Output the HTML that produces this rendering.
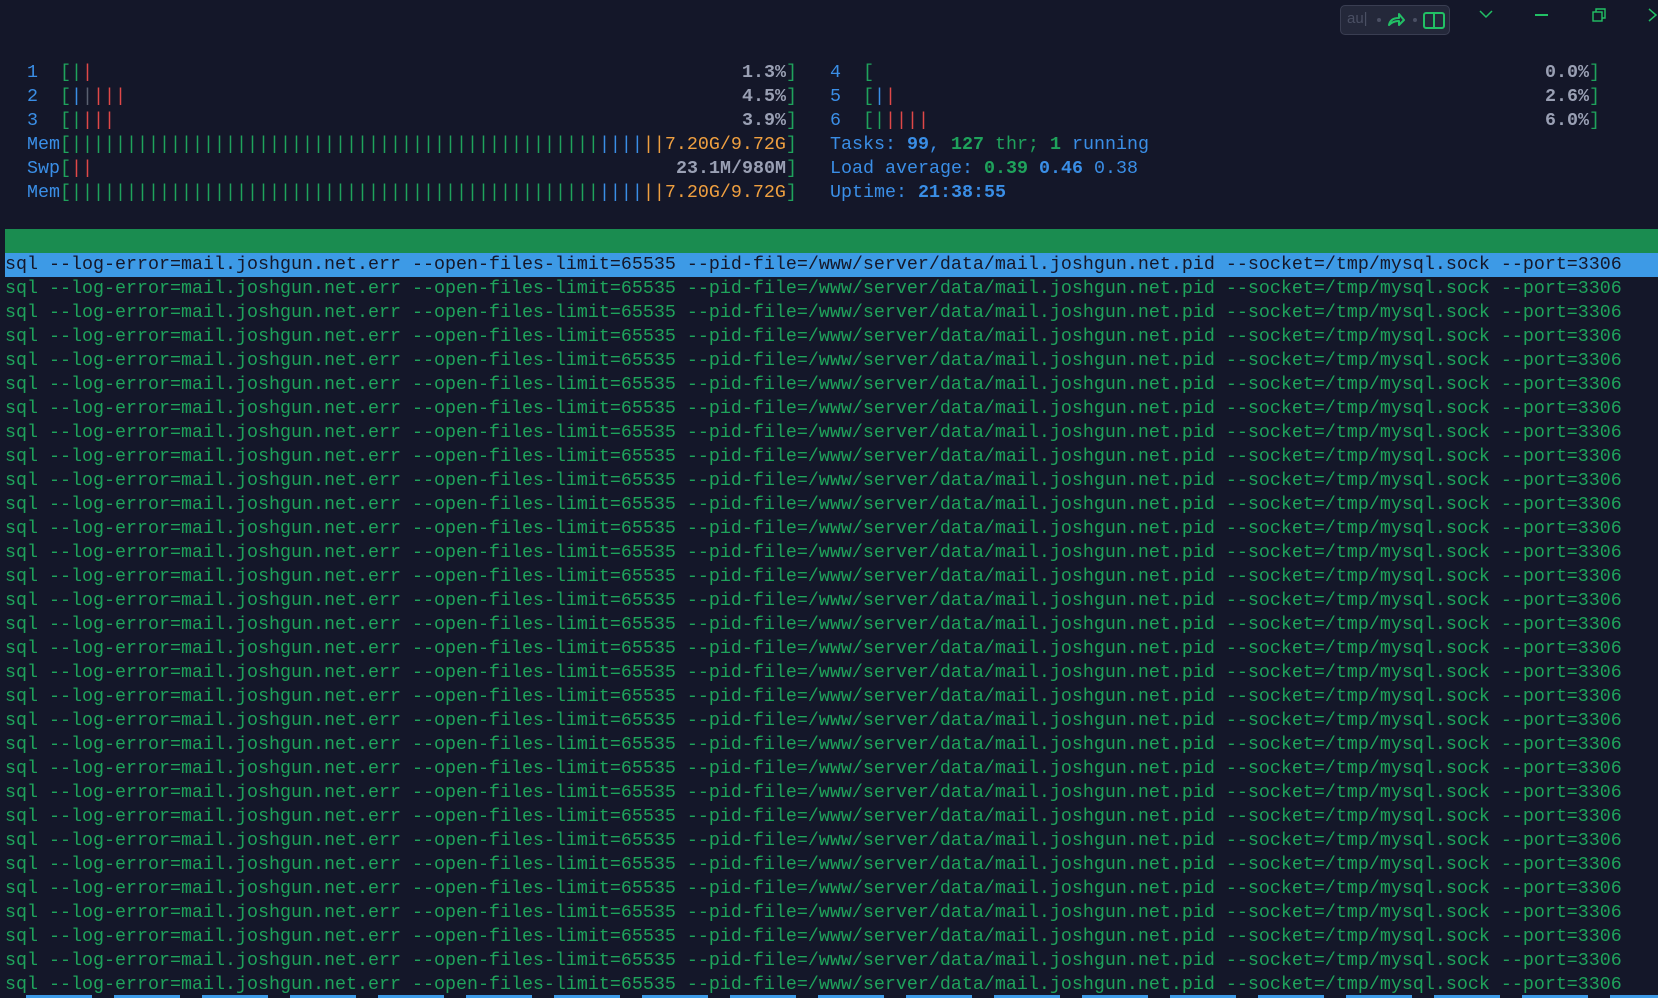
<!DOCTYPE html>
<html><head><meta charset="utf-8"><style>
html,body{margin:0;padding:0;background:#141729;width:1658px;height:998px;overflow:hidden}
body{font-family:"Liberation Mono","DejaVu Sans Mono",monospace;font-size:18.33px;color:#1fa35c}
.r{position:absolute;left:5px;height:24px;width:1653px}
.r span.c{position:absolute;top:0;line-height:24px;white-space:pre}
.b{color:#3a8ee6}.g{color:#1fa35c}.rd{color:#e04848}.gy{color:#9aa0b4;font-weight:bold}.o{color:#f0a040}.B{font-weight:bold}
#hdr{position:absolute;left:5px;top:229px;width:1653px;height:24px;background:#1a8c50}
#sel{position:absolute;left:5px;top:253px;width:1653px;height:24px;background:#3d9ae6;color:#141729}
#procs{position:absolute;left:5px;top:277px;line-height:24px;white-space:pre;color:#1fa35c}
.pill{position:absolute;left:1340px;top:5px;width:108px;height:28px;border:1px solid #3a3e52;border-radius:5px;background:#24283a}
</style></head><body>
<div class="pill"><span style="position:absolute;left:6px;top:4px;font-family:'Liberation Sans',sans-serif;font-size:15px;color:#4a4f63">au|</span>
<span style="position:absolute;left:36px;top:12px;width:4px;height:4px;border-radius:2px;background:#4a4f63"></span>
<svg style="position:absolute;left:46px;top:6px" width="18" height="16" viewBox="0 0 18 16"><path d="M2 13 C3 8 7 6 12 6 L12 2 L17 8 L12 13 L12 9 C8 9 5 10 2 13Z" fill="none" stroke="#22c065" stroke-width="2" stroke-linejoin="round"/></svg>
<span style="position:absolute;left:72px;top:12px;width:4px;height:4px;border-radius:2px;background:#4a4f63"></span>
<svg style="position:absolute;left:82px;top:6px" width="22" height="18"><rect x="1" y="1" width="20" height="15" rx="2" fill="none" stroke="#22c065" stroke-width="2"/><line x1="11" y1="1" x2="11" y2="16" stroke="#22c065" stroke-width="2"/></svg></div>
<svg style="position:absolute;left:1478px;top:8px" width="16" height="12"><path d="M2 3 L8 9 L14 3" fill="none" stroke="#22c065" stroke-width="1.5"/></svg>
<div style="position:absolute;left:1535px;top:14px;width:13px;height:1.5px;background:#22c065"></div>
<svg style="position:absolute;left:1592px;top:8px" width="14" height="14"><rect x="1" y="4" width="9" height="9" fill="none" stroke="#22c065" stroke-width="1.4"/><path d="M4 4 V1 H13 V10 H10" fill="none" stroke="#22c065" stroke-width="1.4"/></svg>
<svg style="position:absolute;left:1648px;top:8px" width="10" height="14"><path d="M1 1 L8 7 L1 13" fill="none" stroke="#22c065" stroke-width="1.5"/></svg>

<div class="r" style="top:61px">
<span class="c b" style="left:22px">1</span><span class="c" style="left:55px"><span class="g">[|</span><span class="rd">|</span></span>
<span class="c gy" style="left:737px">1.3%</span><span class="c g" style="left:781px">]</span>
<span class="c b" style="left:825px">4</span><span class="c g" style="left:858px">[</span>
<span class="c gy" style="left:1540px">0.0%</span><span class="c g" style="left:1584px">]</span></div>
<div class="r" style="top:85px">
<span class="c b" style="left:22px">2</span><span class="c" style="left:55px"><span class="g">[</span><span class="b">|</span><span style="color:#5a6070">|</span><span class="rd">|||</span></span>
<span class="c gy" style="left:737px">4.5%</span><span class="c g" style="left:781px">]</span>
<span class="c b" style="left:825px">5</span><span class="c" style="left:858px"><span class="g">[</span><span class="b">|</span><span class="rd">|</span></span>
<span class="c gy" style="left:1540px">2.6%</span><span class="c g" style="left:1584px">]</span></div>
<div class="r" style="top:109px">
<span class="c b" style="left:22px">3</span><span class="c" style="left:55px"><span class="g">[|</span><span class="rd">|||</span></span>
<span class="c gy" style="left:737px">3.9%</span><span class="c g" style="left:781px">]</span>
<span class="c b" style="left:825px">6</span><span class="c" style="left:858px"><span class="g">[|</span><span class="rd">||||</span></span>
<span class="c gy" style="left:1540px">6.0%</span><span class="c g" style="left:1584px">]</span></div>
<div class="r" style="top:133px">
<span class="c" style="left:22px"><span class="b">Mem</span><span class="g">[||||||||||||||||||||||||||||||||||||||||||||||||</span><span class="b">||||</span><span class="o">||7.20G/9.72G</span><span class="g">]</span></span>
<span class="c" style="left:825px"><span class="b">Tasks: <span class="B">99</span>, </span><span class="g"><span class="B">127</span> thr; <span class="B">1</span></span><span class="b"> running</span></span></div>
<div class="r" style="top:157px">
<span class="c" style="left:22px"><span class="b">Swp</span><span class="g">[</span><span class="rd">||</span></span>
<span class="c gy" style="left:671px">23.1M/980M</span><span class="c g" style="left:781px">]</span>
<span class="c" style="left:825px"><span class="b">Load average: </span><span class="g B">0.39</span> <span class="b B">0.46</span> <span class="b">0.38</span></span></div>
<div class="r" style="top:181px">
<span class="c" style="left:22px"><span class="b">Mem</span><span class="g">[||||||||||||||||||||||||||||||||||||||||||||||||</span><span class="b">||||</span><span class="o">||7.20G/9.72G</span><span class="g">]</span></span>
<span class="c" style="left:825px"><span class="b">Uptime: <span class="B">21:38:55</span></span></span></div>

<div id="hdr"></div>
<div id="sel"><span style="position:absolute;left:0;top:0;line-height:24px;white-space:pre">sql --log-error=mail.joshgun.net.err --open-files-limit=65535 --pid-file=/www/server/data/mail.joshgun.net.pid --socket=/tmp/mysql.sock --port=3306</span></div>
<div id="procs">sql --log-error=mail.joshgun.net.err --open-files-limit=65535 --pid-file=/www/server/data/mail.joshgun.net.pid --socket=/tmp/mysql.sock --port=3306
sql --log-error=mail.joshgun.net.err --open-files-limit=65535 --pid-file=/www/server/data/mail.joshgun.net.pid --socket=/tmp/mysql.sock --port=3306
sql --log-error=mail.joshgun.net.err --open-files-limit=65535 --pid-file=/www/server/data/mail.joshgun.net.pid --socket=/tmp/mysql.sock --port=3306
sql --log-error=mail.joshgun.net.err --open-files-limit=65535 --pid-file=/www/server/data/mail.joshgun.net.pid --socket=/tmp/mysql.sock --port=3306
sql --log-error=mail.joshgun.net.err --open-files-limit=65535 --pid-file=/www/server/data/mail.joshgun.net.pid --socket=/tmp/mysql.sock --port=3306
sql --log-error=mail.joshgun.net.err --open-files-limit=65535 --pid-file=/www/server/data/mail.joshgun.net.pid --socket=/tmp/mysql.sock --port=3306
sql --log-error=mail.joshgun.net.err --open-files-limit=65535 --pid-file=/www/server/data/mail.joshgun.net.pid --socket=/tmp/mysql.sock --port=3306
sql --log-error=mail.joshgun.net.err --open-files-limit=65535 --pid-file=/www/server/data/mail.joshgun.net.pid --socket=/tmp/mysql.sock --port=3306
sql --log-error=mail.joshgun.net.err --open-files-limit=65535 --pid-file=/www/server/data/mail.joshgun.net.pid --socket=/tmp/mysql.sock --port=3306
sql --log-error=mail.joshgun.net.err --open-files-limit=65535 --pid-file=/www/server/data/mail.joshgun.net.pid --socket=/tmp/mysql.sock --port=3306
sql --log-error=mail.joshgun.net.err --open-files-limit=65535 --pid-file=/www/server/data/mail.joshgun.net.pid --socket=/tmp/mysql.sock --port=3306
sql --log-error=mail.joshgun.net.err --open-files-limit=65535 --pid-file=/www/server/data/mail.joshgun.net.pid --socket=/tmp/mysql.sock --port=3306
sql --log-error=mail.joshgun.net.err --open-files-limit=65535 --pid-file=/www/server/data/mail.joshgun.net.pid --socket=/tmp/mysql.sock --port=3306
sql --log-error=mail.joshgun.net.err --open-files-limit=65535 --pid-file=/www/server/data/mail.joshgun.net.pid --socket=/tmp/mysql.sock --port=3306
sql --log-error=mail.joshgun.net.err --open-files-limit=65535 --pid-file=/www/server/data/mail.joshgun.net.pid --socket=/tmp/mysql.sock --port=3306
sql --log-error=mail.joshgun.net.err --open-files-limit=65535 --pid-file=/www/server/data/mail.joshgun.net.pid --socket=/tmp/mysql.sock --port=3306
sql --log-error=mail.joshgun.net.err --open-files-limit=65535 --pid-file=/www/server/data/mail.joshgun.net.pid --socket=/tmp/mysql.sock --port=3306
sql --log-error=mail.joshgun.net.err --open-files-limit=65535 --pid-file=/www/server/data/mail.joshgun.net.pid --socket=/tmp/mysql.sock --port=3306
sql --log-error=mail.joshgun.net.err --open-files-limit=65535 --pid-file=/www/server/data/mail.joshgun.net.pid --socket=/tmp/mysql.sock --port=3306
sql --log-error=mail.joshgun.net.err --open-files-limit=65535 --pid-file=/www/server/data/mail.joshgun.net.pid --socket=/tmp/mysql.sock --port=3306
sql --log-error=mail.joshgun.net.err --open-files-limit=65535 --pid-file=/www/server/data/mail.joshgun.net.pid --socket=/tmp/mysql.sock --port=3306
sql --log-error=mail.joshgun.net.err --open-files-limit=65535 --pid-file=/www/server/data/mail.joshgun.net.pid --socket=/tmp/mysql.sock --port=3306
sql --log-error=mail.joshgun.net.err --open-files-limit=65535 --pid-file=/www/server/data/mail.joshgun.net.pid --socket=/tmp/mysql.sock --port=3306
sql --log-error=mail.joshgun.net.err --open-files-limit=65535 --pid-file=/www/server/data/mail.joshgun.net.pid --socket=/tmp/mysql.sock --port=3306
sql --log-error=mail.joshgun.net.err --open-files-limit=65535 --pid-file=/www/server/data/mail.joshgun.net.pid --socket=/tmp/mysql.sock --port=3306
sql --log-error=mail.joshgun.net.err --open-files-limit=65535 --pid-file=/www/server/data/mail.joshgun.net.pid --socket=/tmp/mysql.sock --port=3306
sql --log-error=mail.joshgun.net.err --open-files-limit=65535 --pid-file=/www/server/data/mail.joshgun.net.pid --socket=/tmp/mysql.sock --port=3306
sql --log-error=mail.joshgun.net.err --open-files-limit=65535 --pid-file=/www/server/data/mail.joshgun.net.pid --socket=/tmp/mysql.sock --port=3306
sql --log-error=mail.joshgun.net.err --open-files-limit=65535 --pid-file=/www/server/data/mail.joshgun.net.pid --socket=/tmp/mysql.sock --port=3306
sql --log-error=mail.joshgun.net.err --open-files-limit=65535 --pid-file=/www/server/data/mail.joshgun.net.pid --socket=/tmp/mysql.sock --port=3306</div>
<div style="position:absolute;top:995px;left:4px;width:1654px;height:3px;background:repeating-linear-gradient(90deg,transparent 0 22px,#3d9ae6 22px 88px)"></div>
</body></html>
